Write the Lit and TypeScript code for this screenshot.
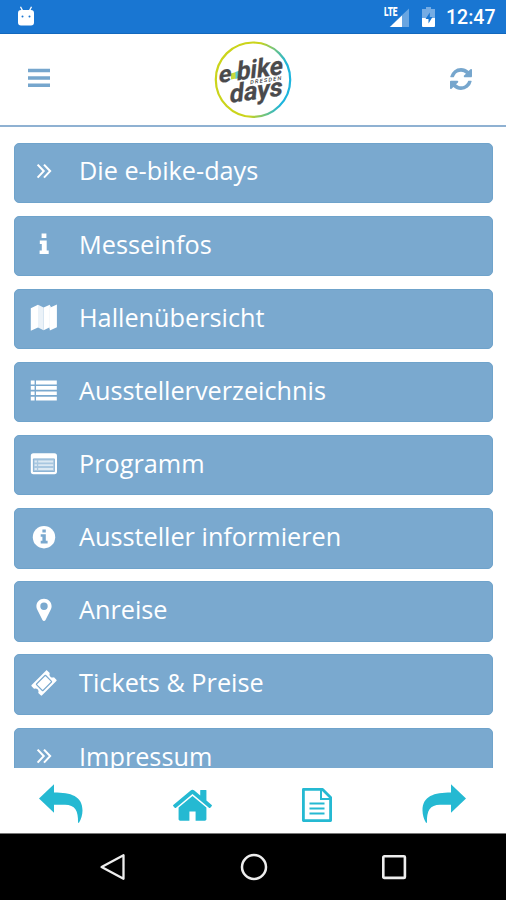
import { LitElement, html, svg, css, type TemplateResult } from "lit";
import { customElement, property } from "lit/decorators.js";

const chevrons = svg`<path d="M7.600 7.600l6.100 6.500-6.100 6.500M14 7.600l6.100 6.500L14 20.600" fill="none" stroke="currentColor" stroke-width="2.100"/>`;

/* Menu glyphs, drawn on a 28 x 28 grid. */
const glyphs: Record<string, TemplateResult> = {
  chevrons,
  info: svg`<path d="M11.600 3.600h4.800v4.400h-4.800zM9.800 10.600h6.900v10h2v3.400H9.600v-3.400h2.200v-6.600h-2z"/>`,
  map: svg`<path d="M.8 5.200L8 1.800v22.600L.8 27.800zM19.800 4.800L26.900 1.400v22.800L19.800 27.600z"/>
    <path opacity=".85" d="M8 1.800l5.600 2.800v22.600L8 24.400z"/>
    <path d="M13.600 4.600l6.200-2.900v22.500l-6.200 3z"/>
    <path opacity=".85" d="M19.300 1.700l1.500 1.800v22.800l-1.500-.9z"/>`,
  list: svg`<path d="M.8 3.600h3.800v3.800H.8zM6 3.600h20.800v3.800H6zM.8 9.100h3.800v3.600H.8zM6 9.100h20.800v3.600H6zM.8 14.400h3.800V18H.8zM6 14.400h20.800V18H6zM.8 19.800h3.800v3.800H.8zM6 19.800h20.800v3.800H6z"/>`,
  listAlt: svg`<rect x=".8" y="3.200" width="26.200" height="21" rx="2.600"/>
    <rect class="cut" x="2.900" y="8.600" width="22" height="13.400" rx=".8"/>
    <rect x="3.500" y="9.200" width="20.800" height="12.200" opacity=".35"/>
    <path opacity=".6" d="M4.600 10.600h2.300v1.800H4.600zM8.200 10.600h15v1.800h-15zM4.600 14.300h2.300v1.800H4.600zM8.200 14.300h15v1.800h-15zM4.600 18.100h2.300v1.800H4.600zM8.200 18.100h15v1.800h-15z"/>`,
  infoCircle: svg`<circle cx="14" cy="14.200" r="11.200"/>
    <path class="cut" d="M12.400 6.400h3.400v3.200h-3.400zM10.700 11.200h5.100v6.600h1.800v2.600h-6.900v-2.600h1.700v-4h-1.700z"/>`,
  marker: svg`<path fill-rule="evenodd" d="M14 2.800c4.300 0 7.600 3.200 7.600 7.400 0 1.400-.3 2.400-.8 3.400l-5.400 10.600c-.6 1.100-2.200 1.100-2.800 0L7.200 13.600c-.5-1-.8-2-.8-3.400C6.400 6 9.700 2.800 14 2.800zm0 3.800a3.700 3.700 0 1 0 0 7.400 3.700 3.700 0 0 0 0-7.400z"/>`,
  ticket: svg`<g transform="rotate(-45 14 14)">
      <path d="M3.900 6.600h20.200c.6 0 1 .4 1 1v3.400a3.200 3.200 0 0 0 0 6v3.400c0 .6-.4 1-1 1H3.900c-.6 0-1-.4-1-1V17a3.200 3.200 0 0 0 0-6V7.600c0-.6.4-1 1-1z"/>
      <rect class="line" x="7.500" y="9.400" width="13" height="9.200" rx=".5"/>
    </g>`,
};

@customElement("menu-entry")
class MenuEntry extends LitElement {
  @property() icon = "chevrons";
  @property() label = "";

  static styles = css`
    :host { display: block; }
    .entry {
      box-sizing: border-box; width: 100%; height: 60.4px; margin: 0; padding: 0 0 0 14.500px;
      display: flex; align-items: center; gap: 21.500px; border: 1px solid #6fa3cb;
      border-radius: 5px; background: #7aa9cf; color: #fff; text-align: left;
      font: 25.250px/34px "Open Sans", sans-serif;
    }
    .glyph { width: 28px; height: 28px; flex: none; fill: currentColor; margin-top: -3px; }
    .cut { fill: #7aa9cf; }
    .line { fill: none; stroke: #7aa9cf; stroke-width: 1.1; }
    .label { margin-top: -4.500px; white-space: nowrap; }
  `;

  render() {
    return html`<button class="entry">
      <svg class="glyph" viewBox="0 0 28 28">${glyphs[this.icon]}</svg>
      <span class="label">${this.label}</span>
    </button>`;
  }
}

@customElement("app-root")
class AppRoot extends LitElement {
  private entries = [
    ["chevrons", "Die e-bike-days"],
    ["info", "Messeinfos"],
    ["map", "Hallenübersicht"],
    ["list", "Ausstellerverzeichnis"],
    ["listAlt", "Programm"],
    ["infoCircle", "Aussteller informieren"],
    ["marker", "Anreise"],
    ["ticket", "Tickets & Preise"],
    ["chevrons", "Impressum"],
  ];

  static styles = css`
    :host { display: flex; flex-direction: column; height: 900px; overflow: hidden; background: #fff; }
    svg { display: block; flex: none; }
    .status {
      height: 34px; box-sizing: border-box; flex: none; display: flex; align-items: center;
      padding: 0 11px 0 17px; background: #1976d2; color: #fff; border-bottom: 1px solid #1268bd;
    }
    .robot { margin-bottom: 2px; }
    .status-right { margin-left: auto; display: flex; align-items: center; }
    .battery { margin-left: 11px; }
    .clock { margin: 3px 0 0 9px; width: 49px; font: 500 19.500px/24px Roboto, sans-serif; white-space: nowrap; }
    .header {
      height: 93px; box-sizing: border-box; flex: none; display: grid;
      grid-template-columns: 1fr 78px 1fr; align-items: center;
      padding: 0 34px 0 28px; border-bottom: 2px solid #8fb1d2; color: #76a6cd;
    }
    .burger { margin-bottom: 3px; }
    .refresh { justify-self: end; margin-bottom: 2px; }
    .logo { margin-left: 3px; }
    .list {
      flex: 1; min-height: 0; overflow: hidden; display: flex; flex-direction: column;
      gap: 12.750px; padding: 15.500px 13px 0 14px;
    }
    .list menu-entry { flex: none; }
    .tools {
      height: 65px; flex: none; display: flex; align-items: center; justify-content: space-between;
      box-sizing: border-box; padding: 5px 40px 0 39px; color: #25b9d2; background: #fff;
    }
    .home, .page { margin-top: 3px; }
    .page { margin-right: 0; }
    .nav {
      height: 67px; flex: none; box-sizing: border-box; border-top: 1px solid #777; background: #000;
      display: flex; justify-content: center; gap: 112.500px; align-items: center; color: #eee;
      padding: 0 0 1px 1px;
    }
  `;

  render() {
    return html`
      <div class="status">
        <svg class="robot" width="18" height="20" viewBox="0 0 18 20" fill="#fff">
          <path d="M3.500 .8l2 3.800M14.500 .8l-2 3.800" stroke="#fff" stroke-width="1.300"/>
          <path fill-rule="evenodd" d="M4 4h10a3 3 0 0 1 3 3v9.500a3 3 0 0 1-3 3H4a3 3 0 0 1-3-3V7a3 3 0 0 1 3-3zm1.500 5.600a1 1 0 1 0 0 2 1 1 0 0 0 0-2zm7 0a1 1 0 1 0 0 2 1 1 0 0 0 0-2z"/>
        </svg>
        <div class="status-right">
          <svg width="26" height="22" viewBox="0 0 26 22" fill="#fff">
            <path opacity=".35" d="M25 2.500v18.500H5.500z"/>
            <path d="M18 9.500V21H6z"/>
            <path fill="#1976d2" d="M0 0h14v11.500H0z"/>
            <text x="0" y="9.800" font-family="Roboto, sans-serif" font-weight="900" font-size="12" textLength="13.500" lengthAdjust="spacingAndGlyphs">LTE</text>
          </svg>
          <svg class="battery" width="16" height="22" viewBox="0 0 16 22" fill="#fff">
            <path opacity=".4" d="M5 1h5v2h4v9H1V3h4z"/>
            <path d="M1 12h13v8a1 1 0 0 1-1 1H2a1 1 0 0 1-1-1z"/>
            <path fill="#1976d2" d="M8.800 6.500L4.500 13h3v4.500l4-6.500h-2.700z"/>
          </svg>
          <span class="clock">12:47</span>
        </div>
      </div>

      <div class="header">
        <svg class="burger" width="22" height="20" viewBox="0 0 22 20" fill="currentColor">
          <path d="M0 .7h22v3.500H0zM0 8.200h22v3.500H0zM0 15.500h22V19H0z"/>
        </svg>
        <svg class="logo" width="78" height="78" viewBox="0 0 78 78">
          <defs>
            <linearGradient id="ring" x1="0" x2="1" y1=".2" y2=".35">
              <stop offset=".55" stop-color="#cbd41b"/>
              <stop offset=".95" stop-color="#1cb4de"/>
            </linearGradient>
          </defs>
          <circle cx="39" cy="38.700" r="37.200" fill="none" stroke="url(#ring)" stroke-width="2.200"/>
          <path d="M17 32.500l5-1.500v6.500l-5 1z" fill="#c8d93c"/>
          <path d="M21.500 31l4-1.500v7.500l-4 1z" fill="#5cc8dc"/>
          <g transform="matrix(1 -.14 -.1 1 0 0)" fill="#4a4a4c" stroke="#4a4a4c" stroke-width=".3" font-family="Roboto, sans-serif" font-weight="700">
            <text x="8.500" y="43.200" font-size="24" textLength="12.500" lengthAdjust="spacingAndGlyphs">e</text>
            <text x="26.500" y="43.200" font-size="26" textLength="46" lengthAdjust="spacingAndGlyphs">bike</text>
            <text x="41" y="49" font-size="5.500" stroke="none" font-weight="500" textLength="31" lengthAdjust="spacing">DRESDEN</text>
            <text x="21.500" y="65" font-size="26" textLength="53" lengthAdjust="spacingAndGlyphs">days</text>
          </g>
        </svg>
        <svg class="refresh" width="22" height="22" viewBox="0 0 1536 1536" fill="currentColor">
          <path d="M1511 928q0 5-1 7-64 268-268 434.500t-478 166.500q-146 0-282.500-55t-243.500-157l-129 129q-19 19-45 19t-45-19-19-45v-448q0-26 19-45t45-19h448q26 0 45 19t19 45-19 45l-137 137q71 66 161 102t187 36q134 0 250-65t186-179q11-17 53-117 8-23 30-23h192q13 0 22.500 9.500t9.500 22.500zm25-800v448q0 26-19 45t-45 19h-448q-26 0-45-19t-19-45 19-45l138-138q-148-137-349-137-134 0-250 65t-186 179q-11 17-53 117-8 23-30 23h-199q-13 0-22.500-9.500t-9.500-22.500v-7q65-268 270-434.500t480-166.500q146 0 284 55.500t245 156.500l130-129q19-19 45-19t45 19 19 45z"/>
        </svg>
      </div>

      <div class="list">
        ${this.entries.map(([icon, label]) => html`<menu-entry icon=${icon} label=${label}></menu-entry>`)}
      </div>

      <div class="tools">
        <svg width="44" height="39" viewBox="0 0 44 39" fill="currentColor">
          <path d="M0 14.500L15 .3v8.200c17 0 28.500 3.500 28.500 18 0 4.500-1.400 8.500-3.500 12.300h-1C39.500 27 36 20.800 26 20.800H15v8z"/>
        </svg>
        <svg class="home" width="39" height="32" viewBox="89 226 1614 1310" fill="currentColor">
          <path d="M1472 992v480q0 26-19 45t-45 19h-384v-384h-256v384h-384q-26 0-45-19t-19-45v-480q0-1 .5-3t.5-3l575-474 575 474q1 2 1 6zm223-69l-62 74q-8 9-21 11h-3q-13 0-21-7l-692-577-692 577q-12 8-24 7-13-2-21-11l-62-74q-8-10-7-23.500t11-21.500l719-599q32-26 76-26t76 26l244 204v-195q0-14 9-23t23-9h192q14 0 23 9t9 23v408l219 182q10 8 11 21.500t-7 23.500z"/>
        </svg>
        <svg class="page" width="30" height="34" viewBox="0 0 30 34" fill="none" stroke="currentColor">
          <path stroke-width="2.800" stroke-linejoin="round" d="M1.400 1.400h19.200l8 8v23.200H1.400z"/>
          <path stroke-width="2" d="M19 2v9h9.500"/>
          <path stroke-width="2" d="M7.500 15.500h15M7.500 20.500h15M7.500 25.500h15"/>
        </svg>
        <svg width="44" height="39" viewBox="0 0 44 39" fill="currentColor">
          <path d="M44 14.500L29 .3v8.200C12 8.500.5 12 .5 26.500c0 4.500 1.400 8.500 3.500 12.300h1C4.500 27 8 20.800 18 20.800h11v8z"/>
        </svg>
      </div>

      <div class="nav">
        <svg width="28" height="28" viewBox="0 0 28 28" fill="none" stroke="currentColor" stroke-width="2.300" stroke-linejoin="round">
          <path d="M24.500 2.200v23.600L2.600 14z"/>
        </svg>
        <svg width="28" height="28" viewBox="0 0 28 28" fill="none" stroke="currentColor" stroke-width="2.500">
          <circle cx="14" cy="14" r="12"/>
        </svg>
        <svg width="28" height="28" viewBox="0 0 28 28" fill="none" stroke="currentColor" stroke-width="2.600">
          <rect x="3.300" y="3.300" width="21.600" height="21.600" rx="1"/>
        </svg>
      </div>
    `;
  }
}
